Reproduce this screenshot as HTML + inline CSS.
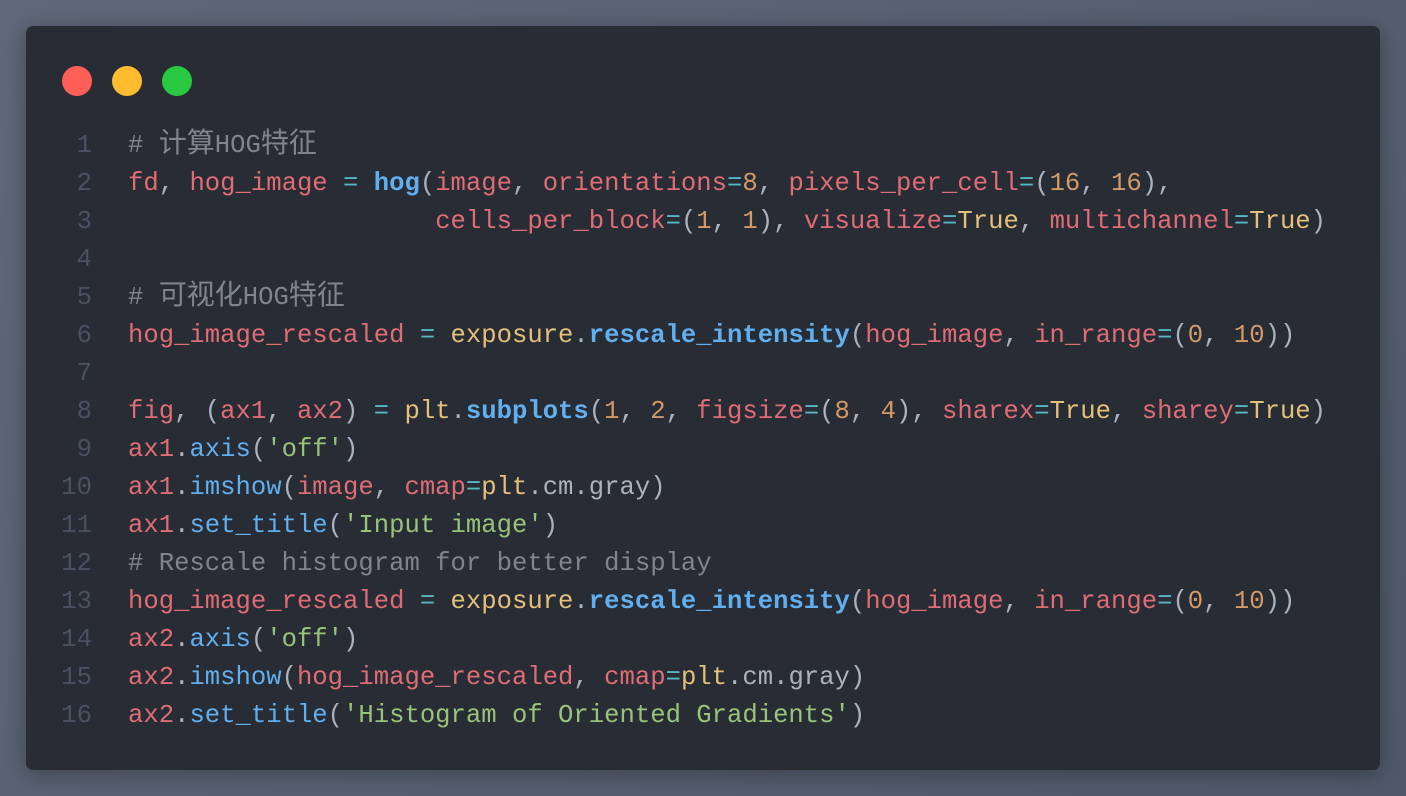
<!DOCTYPE html><html><head><meta charset="utf-8"><style>
body{margin:0;width:1406px;height:796px;background:linear-gradient(135deg,#5f6778,#4f5869);overflow:hidden;font-family:"Liberation Mono","Noto Sans CJK SC",monospace}
.card{position:absolute;left:26px;top:26px;width:1354px;height:744px;background:#282c34;border-radius:7px;box-shadow:0 4px 20px rgba(0,0,0,.3)}
.d{position:absolute;top:40px;width:30px;height:30px;border-radius:50%}
pre{position:absolute;left:0;top:101px;margin:0;font-size:25.6px;line-height:38px;color:#abb2bf;font-family:inherit}
.n{display:inline-block;width:66px;text-align:right;color:#495162;margin-right:36px}
.c{color:#7f848e}.r{color:#e06c75}.b{color:#61afef}.bb{color:#61afef;font-weight:bold}.y{color:#e5c07b}.o{color:#d19a66}.g{color:#98c379}.k{color:#56b6c2}
.z{font-size:28px;line-height:20px}
</style></head><body><div class="card">
<div class="d" style="left:36px;background:#ff5f57"></div><div class="d" style="left:86px;background:#febc2e"></div><div class="d" style="left:136px;background:#28c840"></div>
<pre><span class="n">1</span><span class="c"># <span class="z">计算</span>HOG<span class="z">特征</span></span>
<span class="n">2</span><span class="r">fd</span>, <span class="r">hog_image</span> <span class="k">=</span> <span class="bb">hog</span>(<span class="r">image</span>, <span class="r">orientations</span><span class="k">=</span><span class="o">8</span>, <span class="r">pixels_per_cell</span><span class="k">=</span>(<span class="o">16</span>, <span class="o">16</span>),
<span class="n">3</span>                    <span class="r">cells_per_block</span><span class="k">=</span>(<span class="o">1</span>, <span class="o">1</span>), <span class="r">visualize</span><span class="k">=</span><span class="y">True</span>, <span class="r">multichannel</span><span class="k">=</span><span class="y">True</span>)
<span class="n">4</span>
<span class="n">5</span><span class="c"># <span class="z">可视化</span>HOG<span class="z">特征</span></span>
<span class="n">6</span><span class="r">hog_image_rescaled</span> <span class="k">=</span> <span class="y">exposure</span>.<span class="bb">rescale_intensity</span>(<span class="r">hog_image</span>, <span class="r">in_range</span><span class="k">=</span>(<span class="o">0</span>, <span class="o">10</span>))
<span class="n">7</span>
<span class="n">8</span><span class="r">fig</span>, (<span class="r">ax1</span>, <span class="r">ax2</span>) <span class="k">=</span> <span class="y">plt</span>.<span class="bb">subplots</span>(<span class="o">1</span>, <span class="o">2</span>, <span class="r">figsize</span><span class="k">=</span>(<span class="o">8</span>, <span class="o">4</span>), <span class="r">sharex</span><span class="k">=</span><span class="y">True</span>, <span class="r">sharey</span><span class="k">=</span><span class="y">True</span>)
<span class="n">9</span><span class="r">ax1</span>.<span class="b">axis</span>(<span class="g">'off'</span>)
<span class="n">10</span><span class="r">ax1</span>.<span class="b">imshow</span>(<span class="r">image</span>, <span class="r">cmap</span><span class="k">=</span><span class="y">plt</span>.cm.gray)
<span class="n">11</span><span class="r">ax1</span>.<span class="b">set_title</span>(<span class="g">'Input image'</span>)
<span class="n">12</span><span class="c"># Rescale histogram for better display</span>
<span class="n">13</span><span class="r">hog_image_rescaled</span> <span class="k">=</span> <span class="y">exposure</span>.<span class="bb">rescale_intensity</span>(<span class="r">hog_image</span>, <span class="r">in_range</span><span class="k">=</span>(<span class="o">0</span>, <span class="o">10</span>))
<span class="n">14</span><span class="r">ax2</span>.<span class="b">axis</span>(<span class="g">'off'</span>)
<span class="n">15</span><span class="r">ax2</span>.<span class="b">imshow</span>(<span class="r">hog_image_rescaled</span>, <span class="r">cmap</span><span class="k">=</span><span class="y">plt</span>.cm.gray)
<span class="n">16</span><span class="r">ax2</span>.<span class="b">set_title</span>(<span class="g">'Histogram of Oriented Gradients'</span>)</pre>
</div></body></html>
